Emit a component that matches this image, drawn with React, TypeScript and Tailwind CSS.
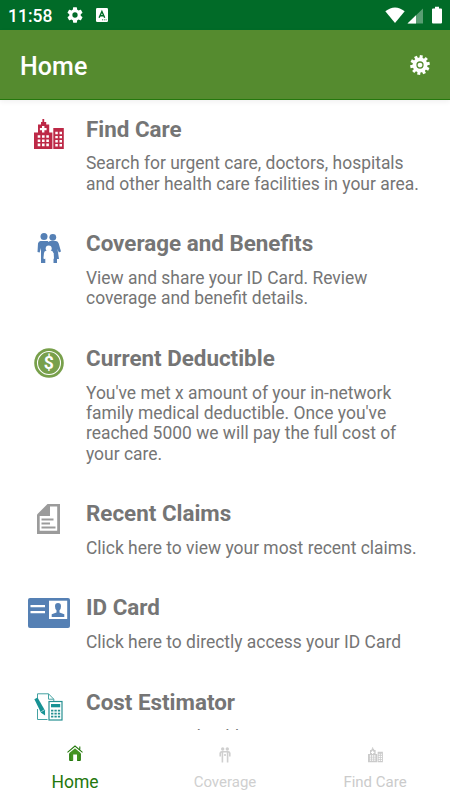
import React from "react";

function Hospital({ className }: { className: string }) {
  return (
    <svg viewBox="0 0 30 31" className={className} fill="currentColor">
      <path fillRule="evenodd" d="M8.400 0h1.800v3h2v2.400h3v8h3.200V30H0V13.400h4V5.400h3V3h1.400zM8 7v2.100H5.900v2.200H8v2.200h2.400v-2.200h2.200V9.100H10.400V7zM3.700 16.200v2.600h2.600v-2.600zm4.300 0v2.600h2.600v-2.600zm4.300 0v2.600h2.600v-2.600zM3.700 20.400V23h2.600v-2.600zm4.300 0V23h2.600v-2.600zm4.300 0V23h2.600v-2.600zM3.700 24.600v2.600h2.600v-2.600zm4.300 0v2.600h2.600v-2.600zm4.300 0v2.600h2.600v-2.600z" />
      <path fillRule="evenodd" d="M19.300 9H29.800v21H19.300zM21.300 12.800v2.400h2.500v-2.400zm4.200 0v2.400H28v-2.400zM21.300 16.900v2.400h2.500v-2.400zm4.200 0v2.400H28v-2.400zM21.300 21v2.400h2.500V21zm4.200 0v2.400H28V21zM21.300 25v2.400h2.500V25zm4.200 0v2.400H28V25z" />
    </svg>
  );
}

function Family() {
  return (
    <svg viewBox="0 0 24 31" className="h-[31px] w-6 text-[#5580b5]" fill="currentColor">
      <circle cx="7" cy="3.600" r="3.500" />
      <circle cx="15.800" cy="4.300" r="3.400" />
      <path d="M3.500 8h7.200l1 1 1-1h6.300q2 .2 2.700 2.500L24 18.500l-2.200 1-1.300-3.500 1.500 10h-2v4h-3.500V20h-8v10H4V18.500L3.700 15l-1 4.500-2.200-.5.500-8.500Q1.500 8.300 3.500 8z" />
      <path d="M9 17.800h5.300q1.900.3 2.100 2.300l.6 5.400-1.800.7-.4-1.500V30.500H8.600v-5.800l-.4 1.500-1.800-.7.600-5.400Q7.200 18.100 9 17.800z" fill="#fff" />
      <circle cx="11.700" cy="15.400" r="3" fill="#fff" />
    </svg>
  );
}

function Dollar() {
  return (
    <svg viewBox="0 0 30 30" className="size-[30px]">
      <circle cx="15" cy="15" r="14.800" fill="#78a04b" />
      <circle cx="15" cy="15" r="11.500" fill="none" stroke="#fff" strokeWidth="1.100" />
      <text x="14.800" y="20.800" textAnchor="middle" fontFamily="Roboto, sans-serif" fontWeight="700" fontSize="17.500" fill="#fff">$</text>
    </svg>
  );
}

function Claim() {
  return (
    <svg viewBox="0 0 23 30" className="h-[30px] w-[23px] text-[#9b9b9b]">
      <path d="M10.500 0H23v30H0V10.500z" fill="currentColor" />
      <path d="M13 2.500h7.200v24.200H2.700V12H13z" fill="#fff" />
      <path d="M4.500 15.500h12M4.500 19.500h8.500M4.500 23.500h14" stroke="currentColor" strokeWidth="2" />
    </svg>
  );
}

function IdCard() {
  return (
    <svg viewBox="0 0 42 30" className="h-[30px] w-[42px]">
      <rect width="42" height="30" rx="2" fill="#5580b4" />
      <path d="M2.500 8.100H17M2.500 14.100H17" stroke="#fff" strokeWidth="2.200" />
      <path d="M21 2.700h18.200V21H21z" fill="#fff" />
      <path d="M27 8.200Q27 5 30 5t3 3.200q0 2.800-1.500 4v2.300l4.800 1.800V19H23.700v-2.700l4.800-1.800v-2.300Q27 11 27 8.200z" fill="#5580b4" />
    </svg>
  );
}

function Estimator() {
  return (
    <svg viewBox="0 0 29 28" className="h-7 w-[29px]" fill="none">
      <path d="M3.500 5V.8h11l5.300 5.400v2M3.500 16v10.500h10M14.500.8v5.400h5.300" stroke="#45a2a2" strokeWidth="1" />
      <path d="M.4 6.300 3.500 4.400 11 17.500l.1 5-4.100-2.700z" fill="#179294" />
      <path d="M7.200 18.700l3.100-1.800" stroke="#fff" strokeWidth=".6" />
      <rect x="15" y="8.500" width="13" height="18.500" fill="#fff" stroke="#258f91" strokeWidth="1.200" />
      <path d="M17 11h9.200v3.300H17z" fill="#179294" />
      <path d="M18.200 16.700v8.500M21.600 16.700v8.500M25 16.700v8.500" stroke="#258f91" strokeWidth="2.300" strokeDasharray="1.900 1.100" />
    </svg>
  );
}

function StatusGear() {
  return (
    <svg viewBox="2 2 20 20" className="size-4" fill="#fff">
      <path d="M19.140 12.940c.04-.3.060-.61.060-.94 0-.32-.02-.64-.07-.94l2.030-1.580c.18-.14.230-.41.120-.61l-1.920-3.320c-.12-.22-.37-.29-.59-.22l-2.390.960c-.5-.38-1.030-.7-1.620-.94L14.400 2.810A.48.480 0 0 0 13.920 2.400h-3.840c-.24 0-.43.170-.47.410L9.250 5.350c-.59.240-1.130.57-1.620.940l-2.390-.96c-.22-.08-.47 0-.59.220L2.740 8.870c-.12.210-.08.470.120.610l2.030 1.580a7 7 0 0 0 0 1.880l-2.030 1.580c-.18.140-.23.410-.12.610l1.920 3.320c.12.220.37.290.59.220l2.390-.96c.5.380 1.030.7 1.620.940l.36 2.540c.05.240.24.410.48.410h3.840c.24 0 .44-.17.470-.41l.36-2.540c.59-.24 1.130-.56 1.620-.94l2.390.96c.22.080.47 0 .59-.22l1.920-3.320c.12-.22.070-.47-.12-.61zM12 15.300a3.300 3.300 0 1 1 0-6.600 3.300 3.300 0 0 1 0 6.600z" />
    </svg>
  );
}

function HeaderGear() {
  const teeth = [0, 36, 72, 108, 144, 180, 216, 252, 288, 324];
  return (
    <svg viewBox="-10 -10 20 20" className="size-5">
      {teeth.map((a) => (
        <path key={a} d="M-1.500-9.800h3V-6h-3z" fill="#fff" transform={`rotate(${a + 8})`} />
      ))}
      <circle r="7.500" fill="#fff" />
      <circle r="3" fill="none" stroke="#558b2f" strokeWidth="1.300" />
    </svg>
  );
}

const items = [
  { title: "Find Care", icon: <Hospital className="h-[31px] w-[30px] text-[#bd2947]" />, lines: ["Search for urgent care, doctors, hospitals", "and other health care facilities in your area."] },
  { title: "Coverage and Benefits", icon: <Family />, lines: ["View and share your ID Card. Review", "coverage and benefit details."] },
  { title: "Current Deductible", icon: <Dollar />, lines: ["You've met x amount of your in-network", "family medical deductible. Once you've", "reached 5000 we will pay the full cost of", "your care."] },
  { title: "Recent Claims", icon: <Claim />, lines: ["Click here to view your most recent claims."] },
  { title: "ID Card", icon: <IdCard />, lines: ["Click here to directly access your ID Card"] },
  { title: "Cost Estimator", icon: <Estimator />, lines: ["Estimate your health care costs"] },
];

export default function App() {
  return (
    <div className="flex h-[800px] w-[450px] flex-col overflow-hidden bg-white font-['Roboto',sans-serif]">
      <div className="flex h-[30px] shrink-0 items-center bg-[#016b28] pl-2 text-white">
        <span className="w-[59px] pt-px text-[17.500px] leading-[30px] font-medium">11:58</span>
        <StatusGear />
        <svg viewBox="0 0 12 14" className="ml-[13px] h-[14px] w-3">
          <rect width="12" height="14" rx="1.200" fill="#fff" />
          <path d="M3.100 9.700 5.900 3.400l2.800 6.300M4.100 7.800h3.600" fill="none" stroke="#016b28" strokeWidth="1.400" />
          <path d="M6 11.800h5" stroke="#016b28" strokeWidth=".8" strokeDasharray="1 .8" />
        </svg>
        <svg viewBox="0 0 58 18" className="mr-[7px] ml-auto h-[18px] w-[58px]" fill="#fff">
          <path d="M.3 5.300Q10 -2.500 19.700 5.300L10 17z" />
          <path d="M38 2.500v15H22.500z" opacity=".35" />
          <path d="M31 9.200v8.300h-8.500z" />
          <path d="M50 .8h4v1.800h2q1 0 1 1v13q0 1-1 1h-8q-1 0-1-1v-13q0-1 1-1h2z" />
        </svg>
      </div>
      <header className="z-10 flex h-[70px] shrink-0 items-center justify-between border-b border-[#24780d] bg-[#558b2f] px-5 shadow-[0_2px_5px_rgba(0,0,0,0.06)]">
        <h1 className="pt-[5px] text-[25px] leading-[30px] font-medium tracking-[0.1px] text-white">Home</h1>
        <HeaderGear />
      </header>
      <main className="h-[630px] shrink-0 overflow-hidden">
        {items.map((item) => (
          <section key={item.title} className="flex pt-[15.500px] pb-[20.450px]">
            <div className="flex h-[37px] w-[86px] shrink-0 items-center justify-center pl-[11px]">{item.icon}</div>
            <div className="whitespace-nowrap">
              <h2 className="h-[37.900px] text-[22.400px] leading-[26px] font-bold text-[#757575]">{item.title}</h2>
              {item.lines.map((line) => (
                <p key={line} className="text-[17.450px] leading-[20.400px] text-[#757575]">{line}</p>
              ))}
            </div>
          </section>
        ))}
      </main>
      <nav className="grid h-[70px] shrink-0 grid-cols-3 bg-white">
        <div className="flex flex-col items-center pt-[15px] text-[#24780d]">
          <svg viewBox="0 0 16 16" className="h-4 w-4">
            <path d="M2.300 8 8 3.300 13.700 8v7.500H10V9.500H6.200v6H2.300z" fill="#459321" />
            <path d="M5.800 15.500H2.800V8.800M13.200 8.800v6.700h-3" fill="none" stroke="#24780d" />
            <path d="M.5 7.300 8 1l7.500 6.300M12.800 4.600V1.500" fill="none" stroke="#24780d" strokeWidth="1.100" />
            <path d="M1.500 8.200 8 2.700l6.500 5.500" fill="none" stroke="#fff" strokeWidth=".4" />
          </svg>
          <span className="mt-[11px] text-[17.500px] leading-5">Home</span>
        </div>
        <div className="flex flex-col items-center pt-[17px] text-[#cfcfcf]">
          <svg viewBox="0 0 12 16" className="h-4 w-3" fill="none" stroke="currentColor">
            <circle cx="3.700" cy="2" r="1.700" fill="currentColor" stroke="none" />
            <circle cx="8.300" cy="2" r="1.700" fill="currentColor" stroke="none" />
            <path d="M1.200 9.500V6.200Q1.400 4.800 3 4.800h6Q10.600 4.800 10.800 6.200V9.500M3.400 5v10.500M8.600 5v10.500" strokeWidth="1.600" />
            <circle cx="6" cy="8" r="1.100" fill="currentColor" stroke="none" />
          </svg>
          <span className="mt-[9px] text-[15px] leading-5">Coverage</span>
        </div>
        <div className="flex flex-col items-center pt-[17px] text-[#cbcbcb]">
          <Hospital className="h-4 w-[15px]" />
          <span className="mt-[9px] text-[15px] leading-5">Find Care</span>
        </div>
      </nav>
    </div>
  );
}
